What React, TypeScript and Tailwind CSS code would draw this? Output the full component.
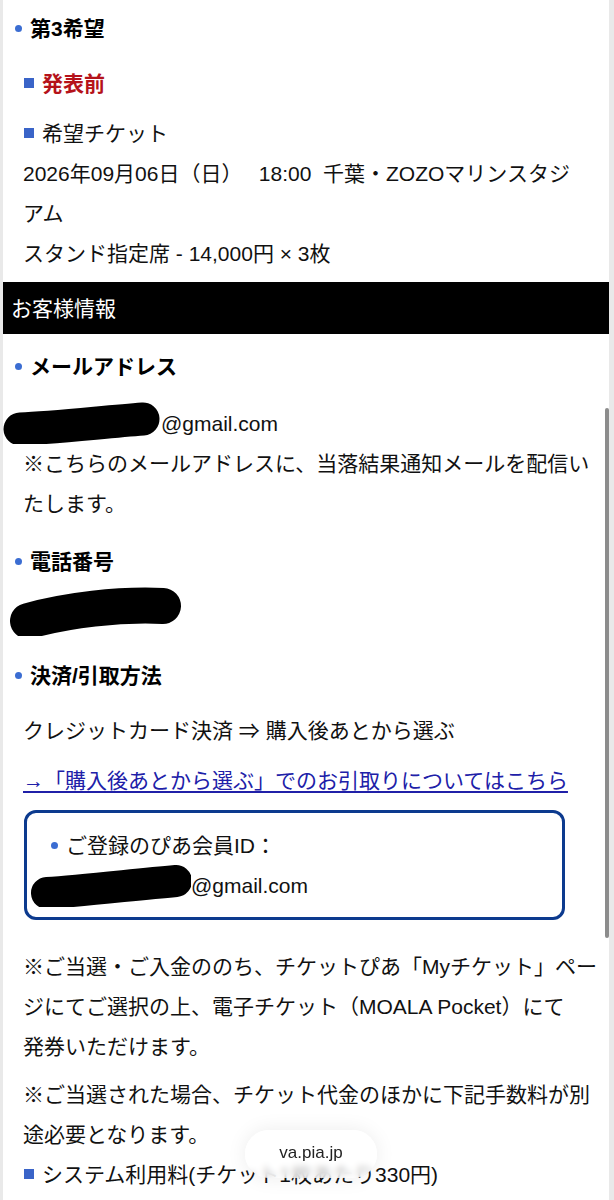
import React from "react";

const font = { fontFamily: '"Liberation Sans", "Noto Sans CJK JP", sans-serif' };

function Dot() {
  return <span className="inline-block w-[7px] h-[7px] rounded-full bg-[#3b6dd2] shrink-0" />;
}

function Square() {
  return <span className="inline-block w-[10px] h-[10px] bg-[#3a64c8] shrink-0" />;
}

function Heading({ children }: { children: React.ReactNode }) {
  return (
    <div className="flex items-center gap-[8px] pl-[12px] h-[40px]">
      <Dot />
      <span className="font-bold text-[21px] text-black">{children}</span>
    </div>
  );
}

function Line({ children, className = "" }: { children: React.ReactNode; className?: string }) {
  return <div className={"h-[40px] flex items-center whitespace-nowrap " + className}>{children}</div>;
}

function Blob({ w, h, d, sw }: { w: number; h: number; d: string; sw: number }) {
  return (
    <svg width={w} height={h} viewBox={`0 0 ${w} ${h}`} className="shrink-0">
      <path d={d} stroke="#000" strokeWidth={sw} strokeLinecap="round" strokeLinejoin="round" fill="none" />
    </svg>
  );
}

export default function App() {
  return (
    <div className="w-[614px] h-[1200px] overflow-hidden bg-[#e9e9e9] pl-[3px] pr-[5px]" style={font}>
      <div className="relative bg-white h-full text-[21px] text-[#111] leading-none">
        {/* 第3希望 */}
        <div className="pt-[8px]">
          <Heading>第3希望</Heading>
          <div className="flex items-center gap-[8px] pl-[21px] h-[40px] mt-[15px]">
            <Square />
            <span className="font-bold text-[#b5121a]">発表前</span>
          </div>
          <div className="flex items-center gap-[8px] pl-[21px] h-[40px] mt-[10px]">
            <Square />
            <span>希望チケット</span>
          </div>
          <div className="pl-[20px]">
            <Line>2026年09月06日（日）　 18:00&nbsp;&nbsp;千葉・ZOZOマリンスタジ</Line>
            <Line>アム</Line>
            <Line>スタンド指定席 - 14,000円 × 3枚</Line>
          </div>
        </div>

        {/* お客様情報 */}
        <div className="mt-[9px] h-[52px] bg-black text-white flex items-center pl-[8px]">お客様情報</div>

        <div className="mt-[12px]">
          <Heading>メールアドレス</Heading>
          <div className="mt-[17px] flex items-center h-[40px]">
            <Blob w={158} h={42} d="M17 27 C50 26, 100 20, 140 17" sw={33} />
            <span>@gmail.com</span>
          </div>
          <div className="pl-[20px]">
            <Line>※こちらのメールアドレスに、当落結果通知メールを配信い</Line>
            <Line>たします。</Line>
          </div>
        </div>

        <div className="mt-[18px]">
          <Heading>電話番号</Heading>
          <div className="mt-[5px] h-[50px] pl-[5px] flex items-center">
            <Blob w={175} h={50} d="M20 35 C60 24, 110 18, 155 20" sw={36} />
          </div>
          <div className="mt-[19px]">
            <Heading>決済/引取方法</Heading>
          </div>
          <div className="pl-[20px] mt-[15px]">
            <Line>クレジットカード決済 ⇒ 購入後あとから選ぶ</Line>
            <Line className="mt-[10px]">
              <a href="#" className="text-[#2020a8] underline underline-offset-[3px] decoration-[1.5px]">
                →「購入後あとから選ぶ」でのお引取りについてはこちら
              </a>
            </Line>
          </div>
        </div>

        {/* 会員ID box */}
        <div className="mt-[10px] ml-[21px] w-[541px] border-[3px] border-[#0c3a8e] rounded-[12px] pt-[12px] pb-[12px]">
          <div className="flex items-center gap-[8px] pl-[24px] h-[40px]">
            <Dot />
            <span>ご登録のぴあ会員ID：</span>
          </div>
          <div className="flex items-center h-[40px] pl-[4px]">
            <Blob w={160} h={44} d="M16 30 C50 28, 100 22, 145 18" sw={32} />
            <span>@gmail.com</span>
          </div>
        </div>

        <div className="pl-[20px] mt-[26px]">
          <Line>※ご当選・ご入金ののち、チケットぴあ「Myチケット」ペー</Line>
          <Line>ジにてご選択の上、電子チケット（MOALA Pocket）にて</Line>
          <Line>発券いただけます。</Line>
          <div className="mt-[8px]">
            <Line>※ご当選された場合、チケット代金のほかに下記手数料が別</Line>
            <Line>途必要となります。</Line>
          </div>
          <div className="flex items-center gap-[8px] h-[40px] pl-[1px]">
            <Square />
            <span>システム利用料(チケット1枚あたり330円)</span>
          </div>
        </div>

        {/* scrollbar */}
        <div className="absolute right-0 top-[408px] w-[4px] h-[530px] rounded-full bg-[#8c8c8c]" />

        {/* url pill */}
        <div className="absolute left-[242px] top-[1130px] w-[132px] h-[48px] rounded-full bg-white/70 backdrop-blur-[3px] shadow-[0_0_20px_rgba(0,0,0,0.08)] flex items-center justify-center">
          <span className="text-[17px] text-[#222] -mt-[3px]">va.pia.jp</span>
        </div>
      </div>
    </div>
  );
}
